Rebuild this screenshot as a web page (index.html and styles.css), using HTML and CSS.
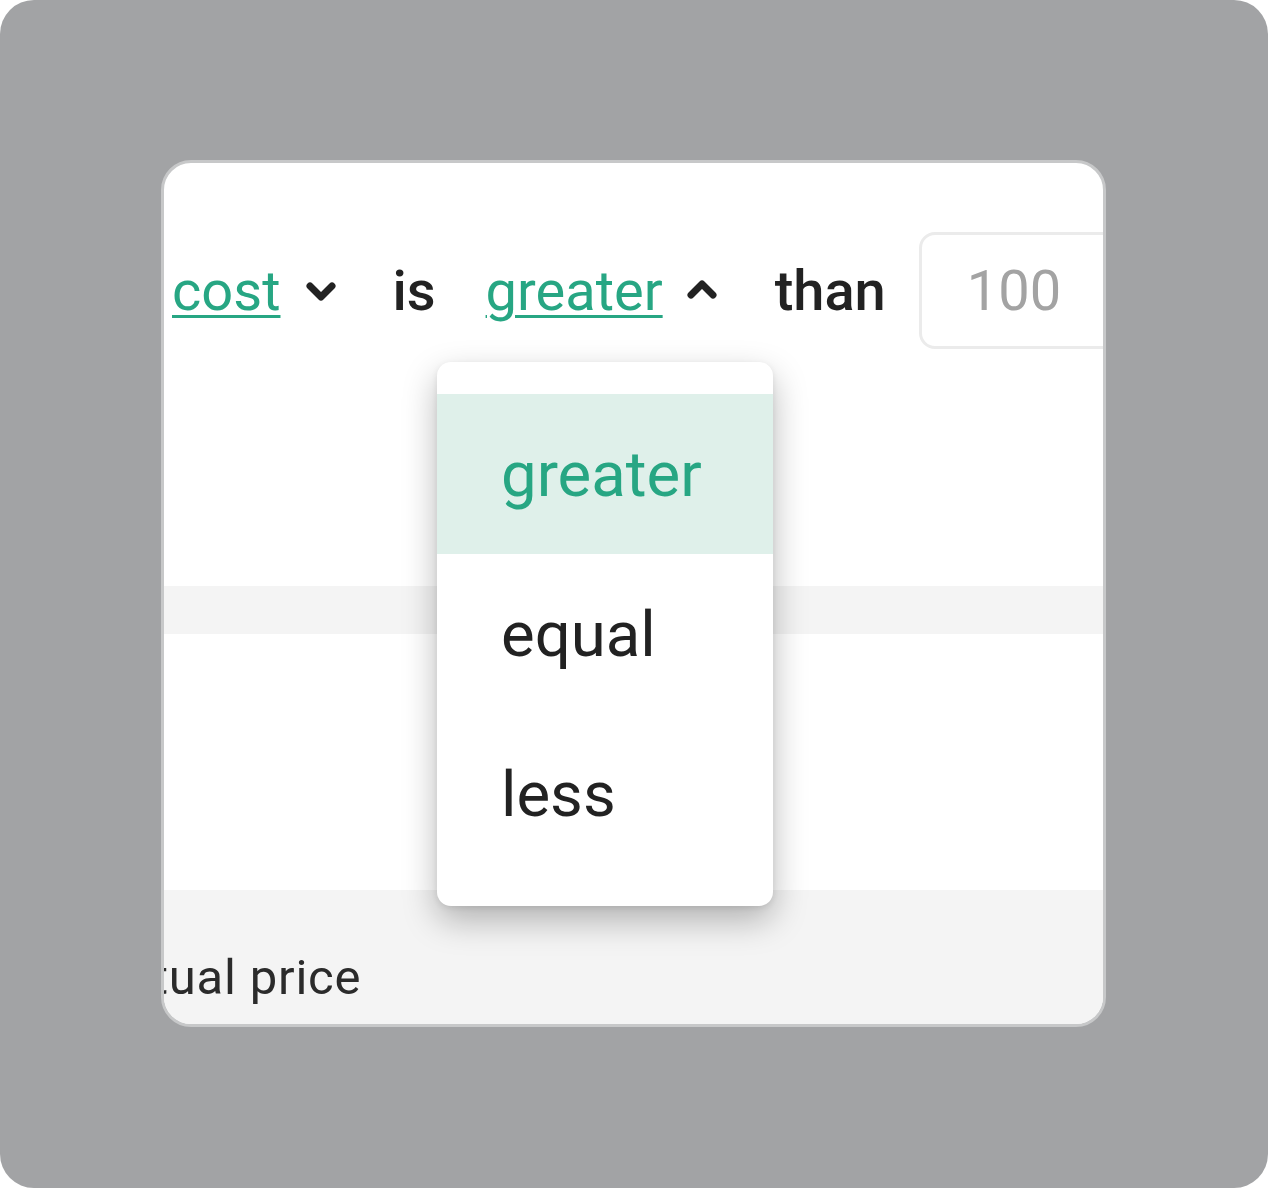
FILE: index.html
```html
<!DOCTYPE html>
<html>
<head>
<meta charset="utf-8">
<link rel="stylesheet" href="styles.css">
</head>
<body>
<div class="frame">
  <div class="card">
    <div class="toolbar">
      <span class="trigger"><span class="link">cost</span><svg class="chev" width="32" height="22" viewBox="0 0 32 22"><polyline points="5,5 16,16 27,5" fill="none" stroke="#222" stroke-width="7" stroke-linecap="round" stroke-linejoin="round"/></svg></span>
      <span class="word is">is</span>
      <span class="trigger"><span class="link">greater</span><svg class="chev up" width="32" height="22" viewBox="0 0 32 22"><polyline points="5,17 16,6 27,17" fill="none" stroke="#222" stroke-width="7" stroke-linecap="round" stroke-linejoin="round"/></svg></span>
      <span class="word than">than</span>
      <div class="input">100</div>
    </div>
    <div class="gap-a"></div>
    <div class="band"></div>
    <div class="gap-b"></div>
    <div class="footer"><span class="footer-text">actual price</span></div>

    <ul class="menu">
      <li class="item active">greater</li>
      <li class="item">equal</li>
      <li class="item">less</li>
    </ul>
  </div>
</div>
</body>
</html>
```
FILE: styles.css
```css
html, body {
  margin: 0;
  padding: 0;
  background: #ffffff;
}
body {
  font-family: Roboto, "Liberation Sans", sans-serif;
}
.frame {
  width: 1268px;
  height: 1188px;
  box-sizing: border-box;
  background: #a2a3a5;
  border-radius: 34px;
  padding: 160px 162px 0 161px;
}
.card {
  position: relative;
  width: 945px;
  height: 867px;
  box-sizing: border-box;
  border: 3px solid #c7c8c9;
  border-radius: 30px;
  background: #ffffff;
  overflow: hidden;
  display: flex;
  flex-direction: column;
}
.toolbar {
  height: 186px;
  box-sizing: border-box;
  padding: 69px 0 0 8px;
  display: flex;
  align-items: flex-start;
  white-space: nowrap;
  flex-shrink: 0;
}
.trigger, .word {
  display: flex;
  align-items: center;
  height: 117px;
  font-size: 56px;
  line-height: 1;
}
.link {
  color: #27a683;
  text-decoration: underline;
  text-decoration-thickness: 3px;
  text-underline-offset: 5px;
}
.chev {
  margin-left: 25px;
  margin-top: 2px;
}
.chev.up {
  margin-left: 23px;
  margin-top: -4px;
}
.word {
  color: #222222;
  font-weight: 500;
}
.is {
  margin-left: 55px;
  margin-right: 50px;
}
.than {
  margin-left: 57px;
  margin-right: 33px;
}
.input {
  flex-shrink: 0;
  width: 260px;
  height: 117px;
  box-sizing: border-box;
  border: 3px solid #ebebeb;
  border-radius: 16px;
  padding-left: 45px;
  display: flex;
  align-items: center;
  font-size: 56px;
  color: #a3a3a3;
}
.gap-a {
  height: 237px;
  flex-shrink: 0;
}
.band {
  height: 48px;
  background: #f4f4f4;
  flex-shrink: 0;
}
.gap-b {
  height: 256px;
  flex-shrink: 0;
}
.footer {
  flex: 1;
  background: #f4f4f4;
  padding-top: 60px;
  box-sizing: border-box;
}
.footer-text {
  display: inline-block;
  margin-left: -66px;
  font-size: 49px;
  line-height: 56px;
  color: #2b2b2b;
  letter-spacing: 0.8px;
}
.menu {
  position: absolute;
  left: 273px;
  top: 199px;
  width: 336px;
  margin: 0;
  padding: 32px 0;
  list-style: none;
  background: #ffffff;
  border-radius: 14px;
  box-shadow: 0 14px 34px rgba(0, 0, 0, 0.28), 0 2px 6px rgba(0, 0, 0, 0.08);
}
.item {
  height: 160px;
  display: flex;
  align-items: center;
  padding-left: 64px;
  font-size: 63.5px;
  color: #222222;
}
.item.active {
  background: #dff0ea;
  color: #27a683;
}
```
